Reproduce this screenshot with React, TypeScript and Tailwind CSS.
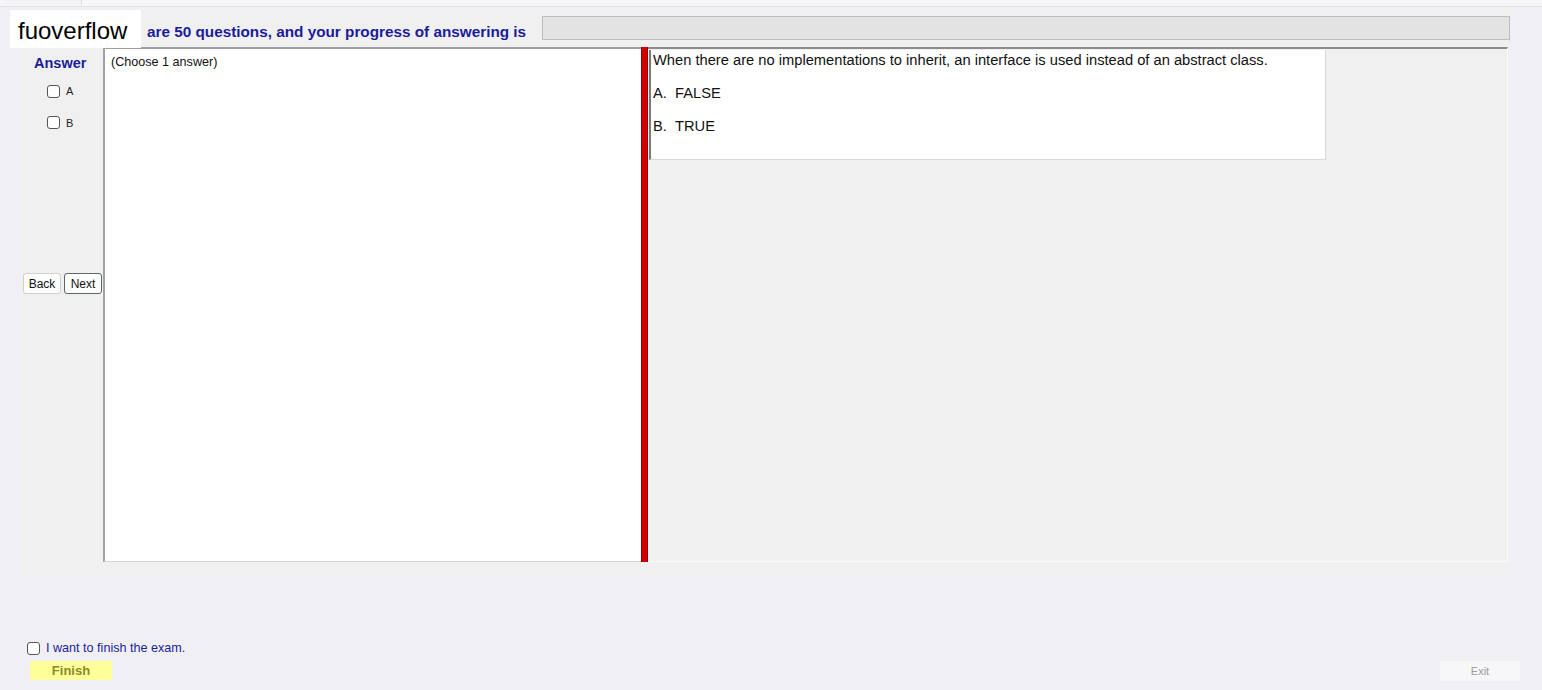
const App = () => {
  return (
    <div className="relative flex h-[690px] w-[1542px] flex-col overflow-hidden bg-[#f0f0f4] font-['Liberation_Sans',Arial,sans-serif]">
      {/* top strip */}
      <div className="flex h-[7px] border-b border-[#e2e2e6] bg-[#f6f6f8]">
        <div className="ml-[4px] h-[5px] w-[78px] border-r border-[#dcdcdc] bg-[#f3f3f3]" />
      </div>

      {/* main panel */}
      <div className="ml-[20px] mt-[1px] flex w-[1490px] flex-col bg-[#f0f0f0] pb-[13px]">
        {/* header */}
        <div className="flex h-[39px] items-start">
          <div className="w-[127px]" />
          <span className="mt-[15px] text-[15.3px] leading-[18px] font-bold text-[#1c1c9a]">are 50 questions, and your progress of answering is</span>
          <div className="ml-[16px] mt-[8px] h-[24px] flex-1 border border-[#bdbdbd] bg-[#e3e3e3]" />
        </div>

        {/* body */}
        <div className="flex h-[515px]">
          {/* answer column */}
          <div className="flex w-[83px] flex-col">
            <div className="mt-[8px] pl-[14px] text-[14.5px] leading-[17px] font-bold text-[#1c1c9a]">Answer</div>
            <label className="mt-[11px] flex items-center pl-[27px] text-[11px] text-[#222]">
              <span className="inline-block h-[13px] w-[13px] rounded-[3px] border border-[#555] bg-white" />
              <span className="ml-[6px]">A</span>
            </label>
            <label className="mt-[15px] flex items-center pl-[27px] text-[11px] text-[#222]">
              <span className="inline-block h-[13px] w-[13px] rounded-[3px] border border-[#555] bg-white" />
              <span className="ml-[6px]">B</span>
            </label>
            <div className="mt-[142px] flex gap-[3px] pl-[3px]">
              <button className="h-[21px] w-[38px] rounded-[3px] border border-[#d0d0d0] bg-[#fdfdfd] text-[12px] text-[#111]">Back</button>
              <button className="h-[21px] w-[38px] rounded-[3px] border border-[#5a6a6a] bg-[#fdfdfd] text-[12px] text-[#111]">Next</button>
            </div>
          </div>

          {/* choose panel */}
          <div className="w-[538px] border-l-2 border-t-2 border-b border-[#a0a0a0] border-b-[#d6d6d6] bg-white px-[6px] pt-[4px] text-[12.6px] text-[#111]">
            (Choose 1 answer)
          </div>

          {/* red splitter */}
          <div className="w-[7px] border-x border-[#9a0000] bg-[#d40000]" />

          {/* question area */}
          <div className="flex w-[860px] flex-col border-t-2 border-r border-b border-[#8c8c8c] border-r-[#fafafa] border-b-[#fafafa] pl-[1px] pt-[1px]">
            <div className="h-[110px] w-[677px] border-l-2 border-[#7a7a7a] border-r border-r-[#d8d8d8] border-b border-b-[#d8d8d8] bg-white pl-[2px] pt-[2px] text-[14.7px] leading-[17px] text-[#111]">
              <div>When there are no implementations to inherit, an interface is used instead of an abstract class.</div>
              <div className="mt-[16px]">A.&nbsp;&nbsp;FALSE</div>
              <div className="mt-[16px]">B.&nbsp;&nbsp;TRUE</div>
            </div>
          </div>
        </div>
      </div>

      {/* bottom */}
      <div className="mt-[64px] flex items-center pl-[27px]">
        <span className="inline-block h-[13px] w-[13px] rounded-[3px] border border-[#555] bg-white" />
        <span className="ml-[6px] text-[12.6px] text-[#1c1c9a]">I want to finish the exam.</span>
      </div>
      <div className="mt-[3px] flex items-center justify-between pl-[30px] pr-[22px]">
        <button className="h-[19px] w-[82px] bg-[#ffff99] text-[13px] font-bold text-[#8a8a2c]">Finish</button>
        <button className="h-[20px] w-[80px] bg-[#f7f7fa] text-[11px] text-[#9a9a9a]">Exit</button>
      </div>

      {/* watermark */}
      <div className="absolute left-[10px] top-[10px] flex h-[38px] w-[131px] items-end bg-white pb-[2px] pl-[8px] text-[24px] leading-[30px] text-black">
        fuoverflow
      </div>
    </div>
  );
};

export default App;
